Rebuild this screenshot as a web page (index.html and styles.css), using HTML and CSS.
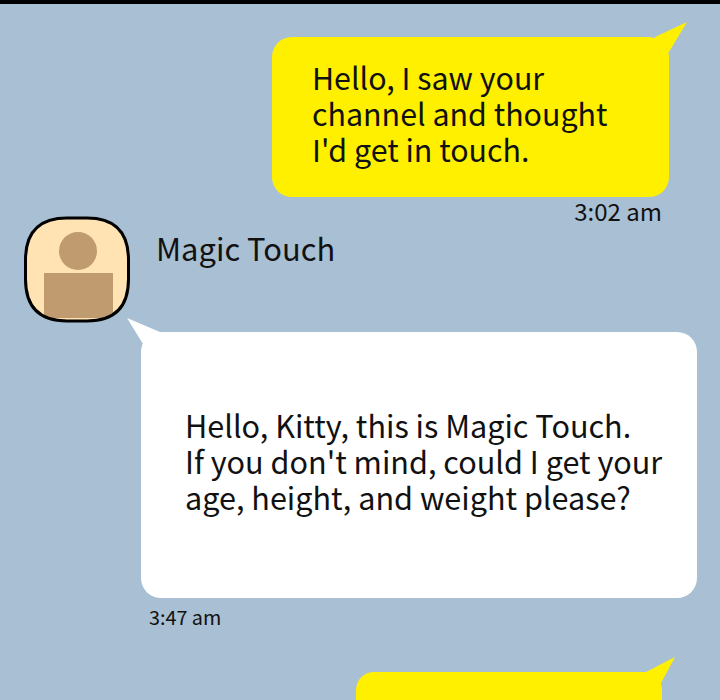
FILE: index.html

```html
<!DOCTYPE html>
<html lang="en">
<head>
    <meta charset="UTF-8">
    <meta name="viewport" content="width=device-width, initial-scale=1.0">
    <title>Chat</title>
    <link rel="stylesheet" href="styles.css">
</head>
<body>
    <div class="chat">
        <div class="bubble bubble-first">
            <svg class="tail tail-first" width="32" height="30" viewBox="0 0 32 30"><path d="M0 15 L32 0 L14 30 L0 30 Z" fill="#fff000"/></svg>
            <p>Hello, I saw your<br>channel and thought<br>I'd get in touch.</p>
        </div>
        <div class="time time-right">3:02 am</div>

        <div class="sender">
            <svg class="avatar" width="108" height="108" viewBox="0 0 108 108">
                <defs>
                    <clipPath id="avatar-clip"><path d="M44 2 H64 C92 2 105.5 16 105.5 44 V63 C105.5 91 92 105 64 105 H44 C16 105 2.5 91 2.5 63 V44 C2.5 16 16 2 44 2 Z"/></clipPath>
                </defs>
                <path d="M44 2 H64 C92 2 105.5 16 105.5 44 V63 C105.5 91 92 105 64 105 H44 C16 105 2.5 91 2.5 63 V44 C2.5 16 16 2 44 2 Z" fill="#ffe3b3"/>
                <g clip-path="url(#avatar-clip)" fill="#bf9b6f">
                    <circle cx="55" cy="35" r="19"/>
                    <rect x="21" y="57" width="69" height="45"/>
                </g>
                <path d="M44 2 H64 C92 2 105.5 16 105.5 44 V63 C105.5 91 92 105 64 105 H44 C16 105 2.5 91 2.5 63 V44 C2.5 16 16 2 44 2 Z" fill="none" stroke="#000" stroke-width="3"/>
            </svg>
            <div class="name">Magic Touch</div>
        </div>

        <div class="bubble bubble-white">
            <svg class="tail tail-white" width="34" height="30" viewBox="0 0 34 30"><path d="M0 0 L33 14 L33 30 L16 30 L16 26 Z" fill="#fff"/></svg>
            <p>Hello, Kitty, this is Magic Touch.<br>If you don't mind, could I get your<br>age, height, and weight please?</p>
        </div>
        <div class="time time-left">3:47 am</div>

        <div class="bubble bubble-last">
            <svg class="tail tail-last" width="29" height="28" viewBox="0 0 29 28"><path d="M0 15 L29 0 L14 28 L0 28 Z" fill="#fff000"/></svg>
        </div>
    </div>
</body>
</html>
```

FILE: styles.css

```css
html, body {
    margin: 0;
    height: 700px;
    overflow: hidden;
}

body {
    background-color: #a9bfd3;
    color: #111;
    font-family: "Noto Sans CJK KR", "Noto Sans", sans-serif;
}

.chat {
    border-top: 4px solid #000;
    padding-top: 33px;
}

.bubble {
    position: relative;
    border-radius: 20px;
    box-sizing: border-box;
    display: flex;
    align-items: center;
}

.bubble p {
    margin: 0;
    line-height: 36px;
    color: #111;
}

.bubble-first {
    width: 397px;
    height: 160px;
    margin-left: 272px;
    padding-left: 40px;
    padding-bottom: 8px;
    background-color: #fff000;
}

.bubble-first p {
    font-size: 30.4px;
}

.bubble-white {
    width: 556px;
    height: 266px;
    margin-left: 141px;
    margin-top: 8px;
    padding-left: 44px;
    padding-bottom: 8px;
    background-color: #fff;
}

.bubble-white p {
    font-size: 30.6px;
}

.bubble-last {
    width: 306px;
    height: 28px;
    margin-left: 356px;
    margin-top: 40px;
    border-radius: 18px 18px 0 0;
    background-color: #fff000;
}

.tail {
    position: absolute;
    display: block;
}

.tail-first {
    right: -18px;
    top: -15px;
}

.tail-white {
    left: -14px;
    top: -14px;
}

.tail-last {
    right: -13px;
    top: -15px;
}

.time {
    font-size: 24px;
    line-height: 30px;
}

.time-right {
    margin-top: -1px;
    margin-right: 58px;
    text-align: right;
}

.time-left {
    margin-top: 4px;
    margin-left: 149px;
    font-size: 19.8px;
}

.sender {
    display: flex;
    align-items: flex-start;
    margin-top: -10px;
    margin-left: 23px;
    gap: 25px;
}

.avatar {
    display: block;
    flex: none;
}

.name {
    font-size: 30.9px;
    line-height: 40px;
    margin-top: 12px;
    color: #111;
}
```
